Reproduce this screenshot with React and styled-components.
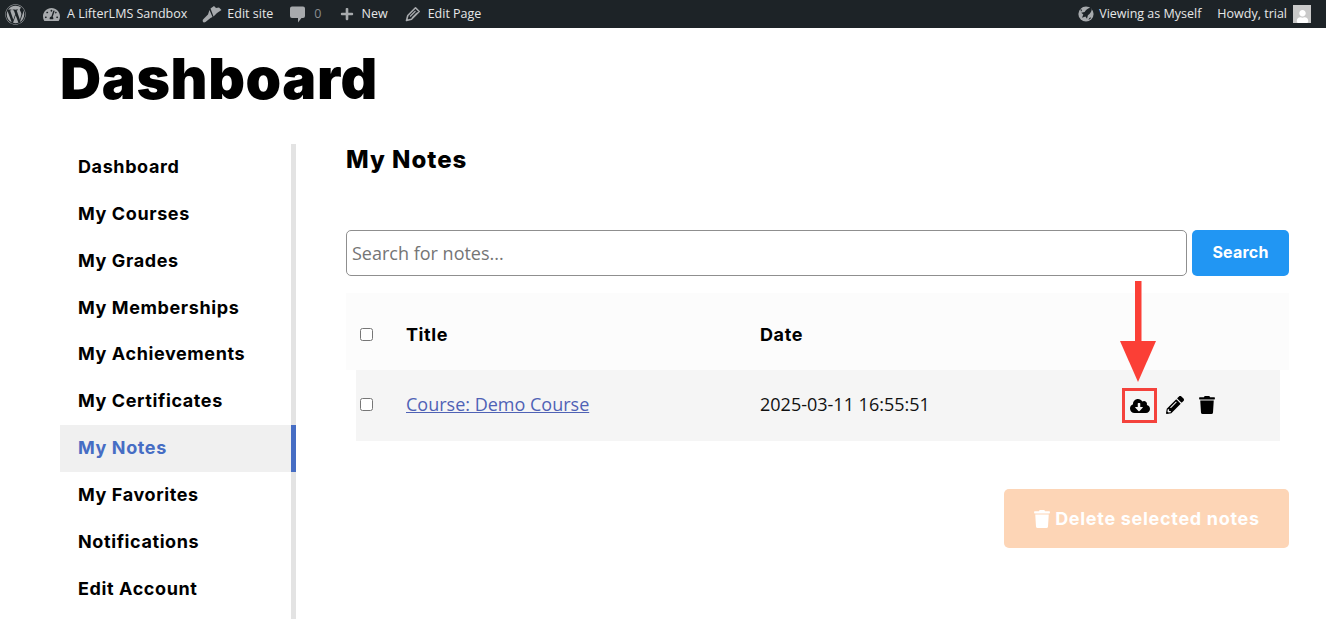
import React from 'react'
import styled, { createGlobalStyle } from 'styled-components'
import {
  FaWordpress, FaTachometerAlt, FaPlus, FaPencilAlt,
  FaCloudDownloadAlt, FaTrash, FaUser,
} from 'react-icons/fa'

const GlobalStyle = createGlobalStyle`
  html, body {
    margin: 0;
    height: 619px;
    overflow: hidden;
    background: #fff;
    font-family: "Open Sans", sans-serif;
    color: #000;
  }
  * { box-sizing: border-box; }
`

const navItems = ['Dashboard', 'My Courses', 'My Grades', 'My Memberships', 'My Achievements', 'My Certificates', 'My Notes', 'My Favorites', 'Notifications', 'Edit Account']

// admin bar icons that the icon packages don't have
const BrushIcon = () => (
  <svg viewBox="0 0 20 18" width="20" height="18" fill="currentColor">
    <path d="M8.5 3.5 L12 1 L14 3 L17 2.5 L19.5 5 L15 8 L11.5 11.5 Z" />
    <path d="M7.5 5 L10.5 12 L8.5 13 L3.5 17 Q1.5 18 0.8 16.5 Q0 15 2 13.5 L6 9.5 Z" />
  </svg>
)

const CommentIcon = () => (
  <svg viewBox="0 0 15 17" width="15" height="17" fill="currentColor">
    <path d="M2 0.5 H13 Q15 0.5 15 2.5 V10 Q15 12 13 12 H11.5 L8 16.5 V12 H2 Q0 12 0 10 V2.5 Q0 0.5 2 0.5 Z" />
  </svg>
)

const EditIcon = () => (
  <svg viewBox="0 0 16 16" width="16" height="16" fill="none" stroke="currentColor">
    <path d="M1.5 14.5 L2.8 9.5 L10.5 1.8 L14.2 5.5 L6.5 13.2 Z" strokeWidth="1.6" strokeLinejoin="round" />
    <path d="M5 10.5 L10.5 5 M7 12 L12 7" strokeWidth="1.2" />
  </svg>
)

const RocketGlobeIcon = () => (
  <svg viewBox="0 0 16 16" width="16" height="16">
    <circle cx="8" cy="8" r="7.6" fill="#a7aaad" />
    <path d="M12.5 1.8 Q8.5 2.5 6.6 6 L3.2 6.8 L5.3 8.4 L4 11.8 L7.4 10.6 L9 12.8 L9.9 9.2 Q13.4 7 13.8 3 Z" fill="#1d2327" />
    <path d="M2 2.5 Q4 3.5 3.2 5.2 M13 12 Q11.5 11.5 11 13.5" stroke="#1d2327" strokeWidth="1" fill="none" />
  </svg>
)

const App = () => (
  <>
    <GlobalStyle />
    <AdminBar>
      <BarGroup>
        <BarIcon $size={21} $left={5}><FaWordpress /></BarIcon>
        <BarIcon $size={17} $left={17}><FaTachometerAlt /></BarIcon>
        <BarText $left={7}>A LifterLMS Sandbox</BarText>
        <BarIcon $left={15}><BrushIcon /></BarIcon>
        <BarText $left={5}>Edit site</BarText>
        <BarIcon $left={17}><CommentIcon /></BarIcon>
        <BarText $left={9} $muted>0</BarText>
        <BarIcon $size={14} $left={18}><FaPlus /></BarIcon>
        <BarText $left={8}>New</BarText>
        <BarIcon $left={17}><EditIcon /></BarIcon>
        <BarText $left={7}>Edit Page</BarText>
      </BarGroup>
      <BarGroup>
        <BarIcon $left={0}><RocketGlobeIcon /></BarIcon>
        <BarText $left={5}>Viewing as Myself</BarText>
        <BarText $left={16}>Howdy, trial</BarText>
        <Avatar><FaUser /></Avatar>
      </BarGroup>
    </AdminBar>

    <Page>
      <PageTitle>Dashboard</PageTitle>
      <Columns>
        <Sidebar>
          {navItems.map(item => (
            <NavItem key={item} $active={item === 'My Notes'}>{item}</NavItem>
          ))}
        </Sidebar>
        <Content>
          <SectionTitle>My Notes</SectionTitle>
          <SearchRow>
            <SearchInput placeholder="Search for notes..." />
            <SearchButton>Search</SearchButton>
          </SearchRow>
          <NotesTable>
            <HeadRow>
              <CheckCell><Check type="checkbox" /></CheckCell>
              <HeadCell>Title</HeadCell>
              <HeadCell>Date</HeadCell>
            </HeadRow>
            <NoteRow>
              <CheckCell><Check type="checkbox" /></CheckCell>
              <NoteLink href="#">Course: Demo Course</NoteLink>
              <DateCell>2025-03-11 16:55:51</DateCell>
              <Actions>
                <Arrow viewBox="0 0 36 101" aria-hidden="true">
                  <rect x="15" y="0" width="6.5" height="62" fill="#fb3f36" />
                  <polygon points="0,60 36,60 18,101" fill="#fb3f36" />
                </Arrow>
                <Highlighted><FaCloudDownloadAlt /></Highlighted>
                <ActionIcon><FaPencilAlt /></ActionIcon>
                <ActionIcon><FaTrash /></ActionIcon>
              </Actions>
            </NoteRow>
          </NotesTable>
          <Footer>
            <DeleteButton><FaTrash />Delete selected notes</DeleteButton>
          </Footer>
        </Content>
      </Columns>
    </Page>
  </>
)

export default App

const AdminBar = styled.div`
  height: 28px;
  background: #1d2327;
  display: flex;
  justify-content: space-between;
  align-items: center;
  padding-right: 15px;
`

const BarGroup = styled.div`
  display: flex;
  align-items: center;
`

const BarIcon = styled.span`
  display: flex;
  margin-left: ${p => p.$left}px;
  color: #a7aaad;
  font-size: ${p => p.$size || 16}px;
`

const BarText = styled.span`
  margin-left: ${p => p.$left}px;
  color: ${p => (p.$muted ? '#8a8d90' : '#e6e7e8')};
  font-size: 12.5px;
  line-height: 28px;
`

const Avatar = styled.span`
  width: 18px;
  height: 18px;
  margin-left: 6px;
  background: #c9c9c9;
  color: #fff;
  font-size: 13px;
  display: flex;
  justify-content: center;
  align-items: flex-end;
`

const Page = styled.div`
  padding: 0 37px 0 60px;
`

const PageTitle = styled.h1`
  margin: 0;
  height: 116px;
  padding-top: 17px;
  font-family: Inter, sans-serif;
  font-size: 57px;
  font-weight: 900;
  line-height: 68px;
  letter-spacing: 0.6px;
`

const Columns = styled.div`
  display: flex;
`

const Sidebar = styled.nav`
  width: 236px;
  flex-shrink: 0;
  height: 475px;
  border-right: 5px solid #e3e3e3;
`

const NavItem = styled.div`
  height: 46.85px;
  margin-right: ${p => (p.$active ? '-5px' : '0')};
  padding-left: 18px;
  background: ${p => (p.$active ? '#f0f0f0' : 'transparent')};
  border-right: ${p => (p.$active ? '5px solid #466dc4' : 'none')};
  color: ${p => (p.$active ? '#466dc4' : '#000')};
  font-family: Inter, sans-serif;
  font-size: 18px;
  font-weight: 700;
  line-height: 46.85px;
  letter-spacing: 0.6px;
`

const Content = styled.main`
  flex: 1;
  margin-left: 50px;
`

const SectionTitle = styled.h2`
  margin: 0;
  height: 86px;
  font-family: Inter, sans-serif;
  font-size: 24px;
  font-weight: 800;
  line-height: 32px;
  letter-spacing: 1px;
`

const SearchRow = styled.div`
  display: flex;
  gap: 5px;
`

const SearchInput = styled.input`
  flex: 1;
  height: 46px;
  padding: 0 5px;
  border: 1px solid #8f8f8f;
  border-radius: 5px;
  background: #fff;
  font-family: "Open Sans", sans-serif;
  font-size: 18px;
  outline: none;

  &::placeholder {
    color: #757575;
    opacity: 1;
  }
`

const SearchButton = styled.button`
  width: 97px;
  height: 46px;
  padding: 0 0 2px;
  border: none;
  border-radius: 5px;
  background: #2196f3;
  color: #fff;
  font-family: Inter, sans-serif;
  font-size: 16px;
  font-weight: 700;
  letter-spacing: 0.2px;
`

const NotesTable = styled.div`
  margin-top: 17px;
  padding: 0 9px 0 10px;
  background: linear-gradient(#fcfcfc, #fcfcfc) top / 100% 77px no-repeat;
`

const rowColumns = `
  display: grid;
  grid-template-columns: 50px 354px 1fr;
  align-items: center;
`

const HeadRow = styled.div`
  ${rowColumns}
  height: 77px;
  padding-top: 6px;
`

const NoteRow = styled.div`
  ${rowColumns}
  grid-template-columns: 50px 354px 363px 1fr;
  height: 71px;
  padding-bottom: 2px;
  background: #f5f5f5;
`

const CheckCell = styled.div`
  display: flex;
  padding-left: 4px;
`

const Check = styled.input`
  width: 13px;
  height: 13px;
  margin: 0;
`

const HeadCell = styled.div`
  font-family: Inter, sans-serif;
  font-size: 18px;
  font-weight: 700;
  letter-spacing: 0.6px;
`

const NoteLink = styled.a`
  margin-bottom: 2px;
  color: #4f62b5;
  font-size: 18px;
`

const DateCell = styled.div`
  margin-bottom: 2px;
  font-size: 18px;
  color: #111;
`

const Actions = styled.div`
  position: relative;
  display: flex;
  align-items: center;
`

const Arrow = styled.svg`
  position: absolute;
  left: -3px;
  top: -105px;
  width: 36px;
  height: 101px;
`

const Highlighted = styled.span`
  flex-shrink: 0;
  width: 35px;
  height: 35px;
  margin: 2px 9px 0 -1px;
  border: 3px solid #f4423c;
  display: flex;
  justify-content: center;
  align-items: center;
  font-size: 20px;

  svg { flex-shrink: 0; }
`

const ActionIcon = styled.span`
  display: flex;
  width: 32px;
  font-size: 18px;
`

const Footer = styled.div`
  display: flex;
  justify-content: flex-end;
  margin-top: 48px;
`

const DeleteButton = styled.button`
  width: 285px;
  height: 59px;
  border: none;
  border-radius: 5px;
  background: #fdd5b6;
  color: #fff;
  display: flex;
  justify-content: center;
  align-items: center;
  gap: 4px;
  font-family: Inter, sans-serif;
  font-size: 18px;
  font-weight: 700;
  letter-spacing: 0.7px;
`
